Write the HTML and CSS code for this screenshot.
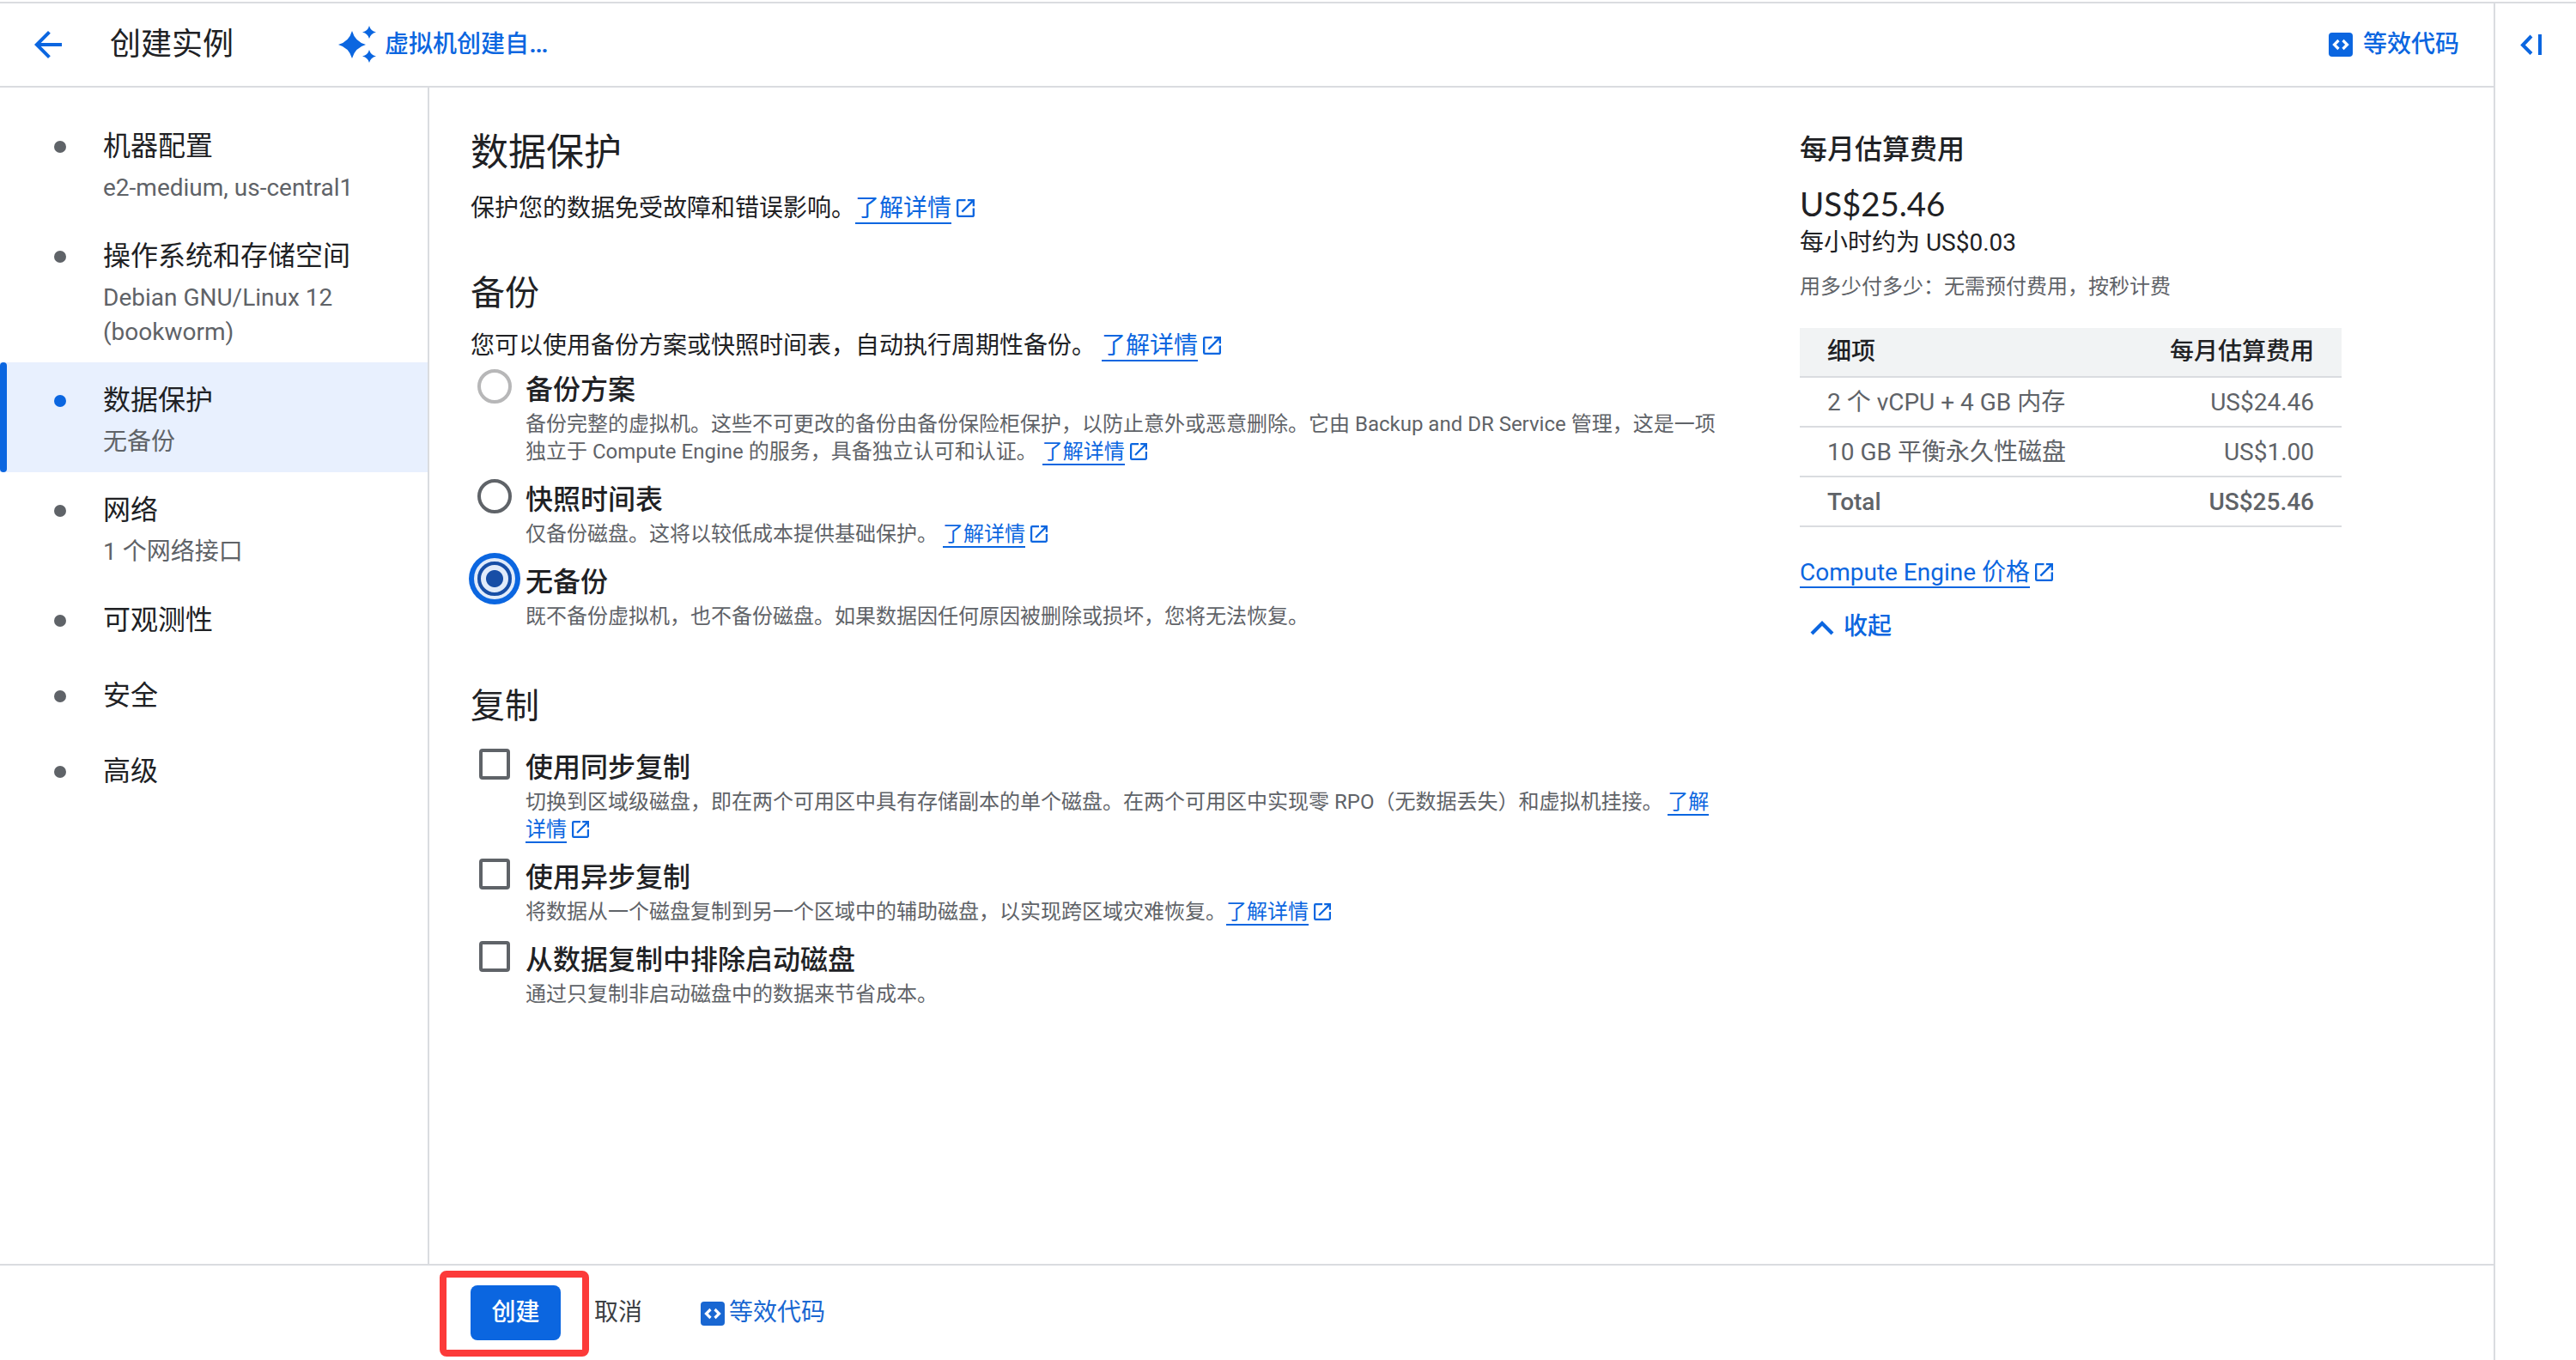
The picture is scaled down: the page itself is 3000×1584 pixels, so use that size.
FILE: index.html
```html
<!DOCTYPE html>
<html lang="zh-CN">
<head>
<meta charset="utf-8">
<title>创建实例</title>
<link rel="stylesheet" href="styles.css">
</head>
<body>
<svg class="defs" aria-hidden="true">
  <symbol id="open" viewBox="3 3 18 18"><path d="M19 19H5V5h7V3H5a2 2 0 0 0-2 2v14a2 2 0 0 0 2 2h14c1.100 0 2-.9 2-2v-7h-2v7zM14 3v2h3.590l-9.830 9.830 1.410 1.410L19 6.410V10h2V3h-7z"/></symbol>
  <symbol id="code" viewBox="0 0 28 28"><rect width="28" height="28" rx="4"/><path d="M11.500 9 6.500 14l5 5M16.500 9l5 5-5 5" fill="none" stroke="#fff" stroke-width="3.200"/></symbol>
</svg>
<div class="app">
  <div class="workspace">
    <header class="topbar">
      <svg class="back" viewBox="0 0 24 24"><path d="M20 11H7.830l5.590-5.590L12 4l-8 8 8 8 1.410-1.410L7.830 13H20v-2z"/></svg>
      <h1 class="page-title">创建实例</h1>
      <button class="assist">
        <svg class="spark" viewBox="0 0 43 43"><path d="M15 6q3.500 12.500 16 16-12.500 3.500-16 16-3.500-12.500-16-16 12.500-3.500 16-16zM35 0q1.500 6 8 7.500-6.500 1.500-8 7.500-1.500-6-8-7.500 6.500-1.500 8-7.500zM35 28q1.500 6 8 7.500-6.500 1.500-8 7.500-1.500-6-8-7.500 6.500-1.500 8-7.500z"/></svg>
        <span>虚拟机创建自<span class="more">…</span></span>
      </button>
      <button class="code-top"><svg class="code-icon"><use href="#code"/></svg><span>等效代码</span></button>
    </header>
    <div class="body">
      <nav class="steps">
        <div class="step"><i class="dot"></i><div><div class="step-name">机器配置</div><div class="step-note">e2-medium, us-central1</div></div></div>
        <div class="step"><i class="dot"></i><div><div class="step-name">操作系统和存储空间</div><div class="step-note">Debian GNU/Linux 12<br>(bookworm)</div></div></div>
        <div class="step active"><i class="dot"></i><div><div class="step-name">数据保护</div><div class="step-note">无备份</div></div></div>
        <div class="step"><i class="dot"></i><div><div class="step-name">网络</div><div class="step-note">1 个网络接口</div></div></div>
        <div class="step"><i class="dot"></i><div class="step-name">可观测性</div></div>
        <div class="step"><i class="dot"></i><div class="step-name">安全</div></div>
        <div class="step"><i class="dot"></i><div class="step-name">高级</div></div>
      </nav>
      <main class="content">
        <section class="form">
          <h2 class="heading">数据保护</h2>
          <p class="lead">保护您的数据免受故障和错误影响。<a class="link">了解详情</a><svg class="open"><use href="#open"/></svg></p>
          <h3 class="subheading">备份</h3>
          <p class="sublead">您可以使用备份方案或快照时间表，自动执行周期性备份。 <a class="link">了解详情</a><svg class="open"><use href="#open"/></svg></p>
          <div class="options">
            <div class="option"><i class="radio disabled"></i><div class="option-text"><div class="label">备份方案</div><p class="desc">备份完整的虚拟机。这些不可更改的备份由备份保险柜保护，以防止意外或恶意删除。它由 Backup and DR Service 管理，这是一项独立于 Compute Engine 的服务，具备独立认可和认证。 <a class="link">了解详情</a><svg class="open"><use href="#open"/></svg></p></div></div>
            <div class="option"><i class="radio"></i><div class="option-text"><div class="label">快照时间表</div><p class="desc">仅备份磁盘。这将以较低成本提供基础保护。 <a class="link">了解详情</a><svg class="open"><use href="#open"/></svg></p></div></div>
            <div class="option"><i class="radio checked"></i><div class="option-text"><div class="label">无备份</div><p class="desc">既不备份虚拟机，也不备份磁盘。如果数据因任何原因被删除或损坏，您将无法恢复。</p></div></div>
          </div>
          <h3 class="subheading second">复制</h3>
          <div class="checks">
            <div class="option"><i class="checkbox"></i><div class="option-text"><div class="label">使用同步复制</div><p class="desc">切换到区域级磁盘，即在两个可用区中具有存储副本的单个磁盘。在两个可用区中实现零 RPO（无数据丢失）和虚拟机挂接。 <a class="link">了解详情</a><svg class="open"><use href="#open"/></svg></p></div></div>
            <div class="option"><i class="checkbox"></i><div class="option-text"><div class="label">使用异步复制</div><p class="desc">将数据从一个磁盘复制到另一个区域中的辅助磁盘，以实现跨区域灾难恢复。<a class="link">了解详情</a><svg class="open"><use href="#open"/></svg></p></div></div>
            <div class="option"><i class="checkbox"></i><div class="option-text"><div class="label">从数据复制中排除启动磁盘</div><p class="desc">通过只复制非启动磁盘中的数据来节省成本。</p></div></div>
          </div>
        </section>
        <aside class="cost">
          <h3 class="cost-title">每月估算费用</h3>
          <div class="price">US$25.46</div>
          <p class="hourly">每小时约为 US$0.03</p>
          <p class="terms">用多少付多少：无需预付费用，按秒计费</p>
          <div class="table">
            <div class="row head"><span>细项</span><span>每月估算费用</span></div>
            <div class="row"><span>2 个 vCPU + 4 GB 内存</span><span>US$24.46</span></div>
            <div class="row"><span>10 GB 平衡永久性磁盘</span><span>US$1.00</span></div>
            <div class="row total"><span>Total</span><span>US$25.46</span></div>
          </div>
          <p class="pricing"><a class="link">Compute Engine 价格</a><svg class="open"><use href="#open"/></svg></p>
          <button class="collapse"><svg class="chevron" viewBox="0 0 28 18"><path d="M2 16 14 4l12 12" fill="none" stroke="currentColor" stroke-width="4.200"/></svg><span>收起</span></button>
        </aside>
      </main>
    </div>
    <footer class="actions">
      <button class="create">创建<span class="marker"></span></button>
      <button class="cancel">取消</button>
      <button class="code-bottom"><svg class="code-icon"><use href="#code"/></svg><span>等效代码</span></button>
    </footer>
  </div>
  <aside class="rail">
    <svg class="expand" viewBox="0 0 26 24"><path d="M13 2 3 12.500 13 22.500" fill="none" stroke="currentColor" stroke-width="4"/><path d="M21 0h4v24h-4z"/></svg>
  </aside>
</div>
</body>
</html>
```
FILE: styles.css
```css
* { box-sizing: border-box; margin: 0; padding: 0; }

body {
  height: 1584px;
  padding-top: 2px;
  overflow: hidden;
  background: #fff;
  color: #202124;
  font: 400 28px/40px Roboto, "Noto Sans CJK SC", sans-serif;
}

button { border: 0; background: none; font: inherit; color: inherit; white-space: nowrap; }
svg { fill: currentColor; flex: none; }
.defs { display: none; }

.app { display: flex; height: 1582px; border-top: 2px solid #dadce0; }
.workspace { width: 2904px; display: flex; flex-direction: column; }
.rail { width: 96px; border-left: 2px solid #dadce0; padding: 36px 0 0 29px; color: #0b66e0; }
.expand { display: block; width: 26px; height: 24px; }

.topbar {
  height: 98px;
  flex: none;
  display: flex;
  align-items: center;
  padding: 0 40px 1px 32px;
  border-bottom: 2px solid #dadce0;
  color: #0b66e0;
}
.back { width: 48px; height: 48px; margin-top: 1px; }
.page-title { margin-left: 48px; font-size: 36px; font-weight: 400; color: #202124; }
.assist { display: flex; align-items: center; margin-left: 123px; font-weight: 500; }
.spark { width: 43px; height: 43px; margin: 0 10px 0 0; overflow: visible; }
.more { font-size: 32px; line-height: 1; }
.code-top { display: flex; align-items: center; gap: 12px; margin-left: auto; font-weight: 500; }
.code-icon { width: 28px; height: 28px; margin-top: 1px; }

.body { flex: 1; display: flex; min-height: 0; }

.steps { width: 500px; flex: none; padding-top: 24px; border-right: 2px solid #dadce0; }
.step {
  position: relative;
  display: flex;
  align-items: flex-start;
  min-height: 88px;
  padding: 20px 0 15px 63px;
}
.dot { width: 14px; height: 14px; flex: none; margin: 18px 43px 0 0; border-radius: 50%; background: #5f6368; }
.step-name { font-size: 32px; line-height: 48px; }
.step-note { margin-top: 5px; color: #5f6368; }
.step.active { background: #e8f0fe; }
.step.active .dot { background: #0b66e0; }
.step.active::before { content: ""; position: absolute; inset: 0 auto 0 0; width: 8px; border-radius: 4px; background: #0b66e0; }

.content { flex: 1; display: flex; }
.form { width: 1460px; margin: 48px 0 0 48px; }
.heading { font-size: 44px; font-weight: 400; line-height: 56px; }
.lead { margin-top: 17px; }
.subheading { margin-top: 53px; font-size: 40px; font-weight: 400; line-height: 52px; }
.subheading.second { margin-top: 47px; }
.sublead { margin-top: 15px; }
.link { color: #0b66e0; border-bottom: 2px solid #0b66e0; }
.open { width: 21px; height: 21px; margin-left: 6px; vertical-align: -1px; color: #0b66e0; }

.options { margin-top: 7px; }
.checks { margin-top: 20px; }
.option { display: flex; align-items: flex-start; padding-left: 8px; }
.option-text { width: 1396px; padding: 4px 0 16px; }
.label { font-size: 32px; font-weight: 500; line-height: 40px; }
.desc { margin-top: 4px; font-size: 24px; line-height: 32px; color: #5f6368; }
.checks .option-text { padding: 5px 0 15px; }
.desc .open { width: 20px; height: 20px; vertical-align: -2px; }
.radio { width: 40px; height: 40px; flex: none; margin-right: 16px; border: 4px solid #5f6368; border-radius: 50%; }
.radio.disabled { border-color: #b7b7b8; }
.radio.checked {
  border-color: #174ea6;
  background: radial-gradient(circle, #174ea6 9.5px, #e1ebfa 10.5px);
  box-shadow: 0 0 0 4px #e1ebfa, 0 0 0 10px #0b66e0;
}
.checkbox { width: 36px; height: 36px; flex: none; margin: 3px 18px 0 2px; border: 4px solid #5f6368; border-radius: 4px; }

.cost { width: 631px; margin: 52px 0 0 88px; }
.cost-title { font-size: 32px; font-weight: 500; line-height: 40px; }
.price { margin-top: 21px; font: 400 38.5px/44px Lato, sans-serif; letter-spacing: -0.1px; }
.hourly { margin-top: 8px; line-height: 32px; }
.terms { margin-top: 19px; font-size: 24px; line-height: 32px; color: #5f6368; }
.table { margin-top: 32px; }
.row {
  display: flex;
  justify-content: space-between;
  height: 58px;
  padding: 0 32px;
  border-bottom: 2px solid #dadce0;
  line-height: 58px;
  color: #5f6368;
}
.row.head { background: #f1f3f4; color: #202124; font-weight: 500; line-height: 56px; }
.row.total { font-weight: 500; }
.pricing { margin-top: 33px; }
.collapse { display: flex; align-items: center; gap: 11px; margin: 23px 0 0 12px; color: #0b66e0; font-weight: 500; }
.chevron { width: 28px; height: 18px; margin-top: 1px; }

.actions {
  height: 112px;
  flex: none;
  display: flex;
  align-items: flex-start;
  padding: 23px 0 0 548px;
  border-top: 2px solid #dadce0;
  line-height: 64px;
}
.create { position: relative; width: 105px; height: 64px; border-radius: 8px; background: #0b66e0; color: #fff; font-weight: 500; }
.marker { position: absolute; left: -36px; top: -17px; width: 174px; height: 100px; border: 8px solid #fc3a39; border-radius: 8px; }
.cancel { margin-left: 39px; color: #3c4043; }
.code-bottom { display: flex; align-items: center; gap: 5px; margin-left: 68px; color: #1967d2; }
```
